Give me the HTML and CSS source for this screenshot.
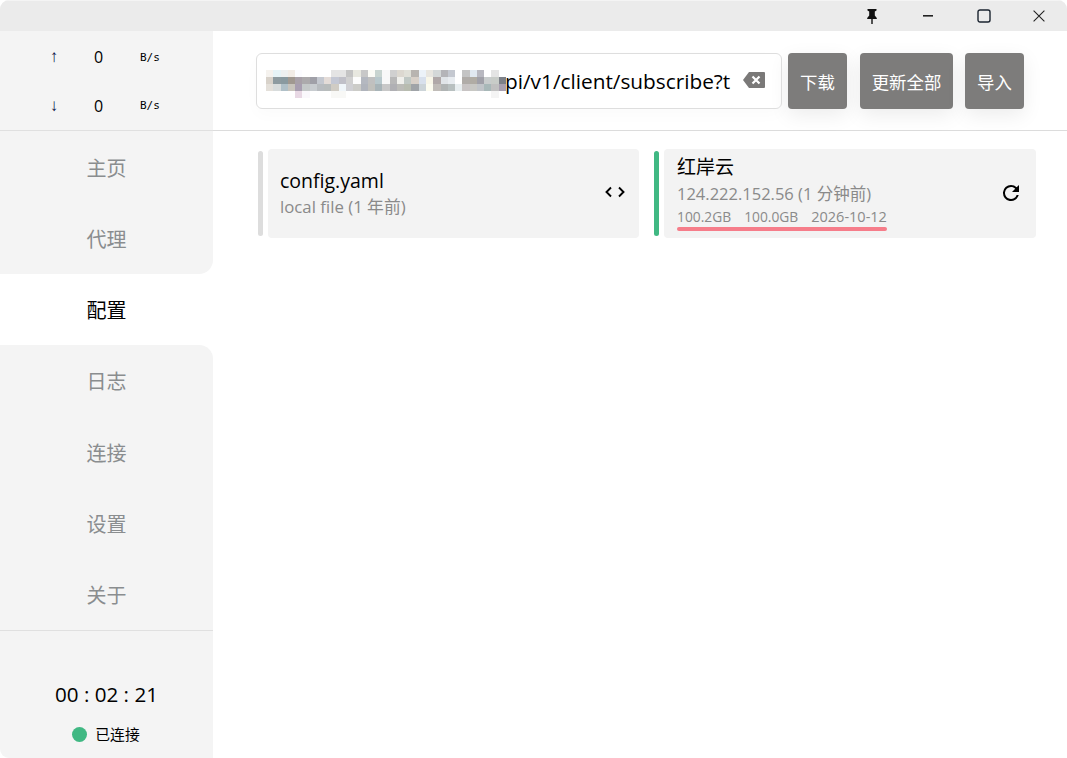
FILE: index.html
```html
<!DOCTYPE html>
<html lang="zh-CN">
<head>
<meta charset="utf-8">
<title>Clash</title>
<link rel="stylesheet" href="styles.css">
</head>
<body>
<div class="app">
  <header class="titlebar">
    <button class="win-btn win-shift"><svg width="14" height="16" viewBox="0 0 14 16"><path d="M2.500 1h9v1.500L9.800 3.500V7.500L11.800 10v1H7.700v5H6.300v-5H2.200v-1L4.200 7.500V3.500L2.500 2.500z" fill="#111"/></svg></button>
    <button class="win-btn win-shift"><svg width="10" height="2" viewBox="0 0 10 2"><rect width="10" height="1.6" fill="#222"/></svg></button>
    <button class="win-btn win-shift"><svg width="14" height="14" viewBox="0 0 14 14"><rect x="1" y="1" width="12" height="12" rx="2" fill="none" stroke="#1b2430" stroke-width="1.4"/></svg></button>
    <button class="win-btn"><svg width="12" height="12" viewBox="0 0 12 12"><path d="M.6.6l10.800 10.800M11.400.6L.6 11.400" stroke="#222" stroke-width="1.100" fill="none"/></svg></button>
  </header>
  <div class="layout">
    <aside class="sidebar">
      <section class="traffic">
        <div class="traffic-row"><span class="traffic-arrow">↑</span><span class="traffic-num">0</span><span class="traffic-unit">B/s</span></div>
        <div class="traffic-row"><span class="traffic-arrow">↓</span><span class="traffic-num">0</span><span class="traffic-unit">B/s</span></div>
      </section>
      <nav class="nav">
        <a class="nav-item">主页</a>
        <a class="nav-item nav-before">代理</a>
        <a class="nav-item nav-active">配置</a>
        <a class="nav-item nav-after">日志</a>
        <a class="nav-item">连接</a>
        <a class="nav-item">设置</a>
        <a class="nav-item">关于</a>
      </nav>
      <footer class="side-foot">
        <div class="clock">00 : 02 : 21</div>
        <div class="status"><span class="status-dot"></span>已连接</div>
      </footer>
    </aside>
    <main class="main">
      <section class="toolbar">
        <div class="url-box">
          <svg class="mosaic" width="240" height="28" viewBox="0 0 33 4" preserveAspectRatio="none" shape-rendering="crispEdges">
            <g>
              <rect x="0" y="0" width="1" height="1" fill="#f5f2ee"/><rect x="0" y="1" width="1" height="1" fill="#d8d2ca"/><rect x="0" y="2" width="1" height="1" fill="#e4e0da"/>
              <rect x="1" y="0" width="1" height="1" fill="#e6f3f6"/><rect x="1" y="1" width="1" height="1" fill="#8e9ba0"/><rect x="1" y="2" width="1" height="1" fill="#d8dcdc"/>
              <rect x="2" y="0" width="1" height="1" fill="#eef0f0"/><rect x="2" y="1" width="1" height="1" fill="#8a9aa0"/><rect x="2" y="2" width="1" height="1" fill="#b0c0c8"/>
              <rect x="3" y="0" width="1" height="1" fill="#f2ece6"/><rect x="3" y="1" width="1" height="1" fill="#a09890"/><rect x="3" y="2" width="1" height="1" fill="#c8c4bc"/>
              <rect x="4" y="0" width="1" height="1" fill="#fcfcff"/><rect x="4" y="1" width="1" height="1" fill="#a8a0a8"/><rect x="4" y="2" width="1" height="1" fill="#a89eb0"/><rect x="4" y="3" width="1" height="1" fill="#e8d8e4"/>
              <rect x="5" y="1" width="1" height="1" fill="#acaaac"/><rect x="5" y="2" width="1" height="1" fill="#c4c8c8"/><rect x="5" y="3" width="1" height="1" fill="#faf8fc"/>
              <rect x="6" y="1" width="1" height="1" fill="#a0a0a8"/><rect x="6" y="2" width="1" height="1" fill="#c8ccd0"/>
              <rect x="7" y="1" width="1" height="1" fill="#c4c8d0"/><rect x="7" y="2" width="1" height="1" fill="#b8bcc0"/>
              <rect x="8" y="1" width="1" height="1" fill="#e4dcd8"/><rect x="8" y="2" width="1" height="1" fill="#b8bcbc"/>
              <rect x="9" y="0" width="1" height="1" fill="#e4e4e4"/><rect x="9" y="1" width="1" height="1" fill="#c4c8d4"/><rect x="9" y="2" width="1" height="1" fill="#d0ccc4"/><rect x="9" y="3" width="1" height="1" fill="#f8f8f6"/>
              <rect x="10" y="0" width="1" height="1" fill="#e4e4e4"/><rect x="10" y="1" width="1" height="1" fill="#c0c0c8"/><rect x="10" y="2" width="1" height="1" fill="#f0f6fa"/><rect x="10" y="3" width="1" height="1" fill="#f8f8f6"/>
              <rect x="11" y="0" width="1" height="1" fill="#c4c4c4"/><rect x="11" y="1" width="1" height="1" fill="#d0d0d0"/><rect x="11" y="2" width="1" height="1" fill="#d0d0d4"/>
              <rect x="12" y="0" width="1" height="1" fill="#e8e8e0"/><rect x="12" y="1" width="1" height="1" fill="#fcfcfc"/><rect x="12" y="2" width="1" height="1" fill="#ccccc8"/>
              <rect x="13" y="0" width="1" height="1" fill="#c8c8c8"/><rect x="13" y="1" width="1" height="1" fill="#b4b8c0"/><rect x="13" y="2" width="1" height="1" fill="#b0b4bc"/>
              <rect x="14" y="0" width="1" height="1" fill="#fbfbf6"/><rect x="14" y="1" width="1" height="1" fill="#c0c0c0"/><rect x="14" y="2" width="1" height="1" fill="#c0c0bc"/>
              <rect x="15" y="0" width="1" height="1" fill="#c8d4d0"/><rect x="15" y="1" width="1" height="1" fill="#b8c8cc"/><rect x="15" y="2" width="1" height="1" fill="#a8b4b8"/>
              <rect x="16" y="0" width="1" height="1" fill="#f8f8f8"/><rect x="16" y="1" width="1" height="1" fill="#f8f8f8"/><rect x="16" y="2" width="1" height="1" fill="#c8c8c8"/>
              <rect x="17" y="0" width="1" height="1" fill="#d0d0d0"/><rect x="17" y="1" width="1" height="1" fill="#b8b8b8"/><rect x="17" y="2" width="1" height="1" fill="#b0b0b4"/>
              <rect x="18" y="0" width="1" height="1" fill="#dcd8d0"/><rect x="18" y="1" width="1" height="1" fill="#f0f0ec"/><rect x="18" y="2" width="1" height="1" fill="#bcbcb8"/>
              <rect x="19" y="0" width="1" height="1" fill="#e0e0d8"/><rect x="19" y="1" width="1" height="1" fill="#c0c8c4"/><rect x="19" y="2" width="1" height="1" fill="#b8bcb0"/>
              <rect x="20" y="0" width="1" height="1" fill="#b8b4b0"/><rect x="20" y="1" width="1" height="1" fill="#d8d0c8"/><rect x="20" y="2" width="1" height="1" fill="#a0a4a8"/>
              <rect x="21" y="0" width="1" height="1" fill="#ecf2f8"/><rect x="21" y="1" width="1" height="1" fill="#d8e0ec"/><rect x="21" y="2" width="1" height="1" fill="#ccd4d8"/>
              <rect x="22" y="0" width="1" height="1" fill="#e8e6e0"/><rect x="22" y="1" width="1" height="1" fill="#f8f6e8"/><rect x="22" y="2" width="1" height="1" fill="#fcfcf0"/>
              <rect x="23" y="0" width="1" height="1" fill="#d4d8d8"/><rect x="23" y="1" width="1" height="1" fill="#b0a8a8"/><rect x="23" y="2" width="1" height="1" fill="#c0bcb8"/>
              <rect x="24" y="0" width="1" height="1" fill="#b4b4b8"/><rect x="24" y="1" width="1" height="1" fill="#e0e4e8"/><rect x="24" y="2" width="1" height="1" fill="#b0b4b4"/>
              <rect x="25" y="0" width="1" height="1" fill="#c4c8d0"/><rect x="25" y="1" width="1" height="1" fill="#e8ecf0"/><rect x="25" y="2" width="1" height="1" fill="#b8c0c0"/>
              <rect x="26" y="2" width="1" height="1" fill="#e8eef0"/>
              <rect x="27" y="0" width="1" height="1" fill="#c4c4c4"/><rect x="27" y="1" width="1" height="1" fill="#b0aca8"/><rect x="27" y="2" width="1" height="1" fill="#c8c4c4"/>
              <rect x="28" y="0" width="1" height="1" fill="#e0e8f0"/><rect x="28" y="1" width="1" height="1" fill="#b0aca4"/><rect x="28" y="2" width="1" height="1" fill="#c8c8c4"/>
              <rect x="29" y="0" width="1" height="1" fill="#b8b8c0"/><rect x="29" y="1" width="1" height="1" fill="#a0a0a8"/><rect x="29" y="2" width="1" height="1" fill="#c0c4c8"/>
              <rect x="30" y="1" width="1" height="1" fill="#c8cccc"/><rect x="30" y="2" width="1" height="1" fill="#a8b8b8"/>
              <rect x="31" y="0" width="1" height="1" fill="#e4e4e4"/><rect x="31" y="1" width="1" height="1" fill="#c8ccc8"/><rect x="31" y="2" width="1" height="1" fill="#c0c0c0"/><rect x="31" y="3" width="1" height="1" fill="#f4f4f4"/>
              <rect x="32" y="1" width="1" height="1" fill="#7c8088"/><rect x="32" y="2" width="1" height="1" fill="#a8a0b0"/>
            </g>
          </svg>
          <span class="url-text">pi/v1/client/subscribe?t</span>
          <svg class="url-clear" width="24" height="18" viewBox="0 0 24 18"><path d="M7 1h15a1 1 0 0 1 1 1v14a1 1 0 0 1-1 1H7L1 9z" fill="#7a7978"/><path d="M10.500 5.500l7 7M17.500 5.500l-7 7" stroke="#fff" stroke-width="2.200"/></svg>
        </div>
        <button class="tool-btn btn-a">下载</button>
        <button class="tool-btn btn-b">更新全部</button>
        <button class="tool-btn btn-c">导入</button>
      </section>
      <section class="profiles">
        <article class="profile">
          <span class="profile-bar"></span>
          <div class="profile-card card-local">
            <div class="profile-info">
              <div class="profile-name">config.yaml</div>
              <div class="profile-sub">local file (1 年前)</div>
            </div>
            <svg class="icon-code" width="20" height="12" viewBox="0 0 20 12"><path d="M6 1.500L1.500 6 6 10.500M14 1.500L18.500 6 14 10.500" fill="none" stroke="#000" stroke-width="1.900"/></svg>
          </div>
        </article>
        <article class="profile">
          <span class="profile-bar bar-on"></span>
          <div class="profile-card">
            <div class="profile-info info-remote">
              <div class="profile-name name-cjk">红岸云</div>
              <div class="profile-sub">124.222.152.56 (1 分钟前)</div>
              <div class="profile-usage"><span>100.2GB</span><span>100.0GB</span><span class="usage-date">2026-10-12</span></div>
              <div class="usage-line"></div>
            </div>
            <svg class="icon-refresh" width="24" height="24" viewBox="0 0 24 24"><path d="M17.650 6.350A7.960 7.960 0 0 0 12 4a8 8 0 1 0 7.730 10h-2.080A6 6 0 1 1 12 6c1.660 0 3.140.69 4.220 1.780L13 11h7V4z" fill="#000"/></svg>
          </div>
        </article>
      </section>
    </main>
  </div>
</div>
</body>
</html>
```

FILE: styles.css
```css
* { box-sizing: border-box; }
html, body { margin: 0; height: 100%; background: #fff; }
body { font-family: "Open Sans", "Noto Sans CJK SC", sans-serif; color: #000; overflow: hidden; }
.app { width: 1067px; height: 758px; display: flex; flex-direction: column; border-radius: 9px; overflow: hidden; }

.titlebar { height: 31px; flex: none; background: #ebebeb; display: flex; justify-content: flex-end; align-items: center; border-top: 1px solid #f4f4f4; }
.win-btn { width: 56px; height: 30px; border: 0; padding: 0; background: none; display: flex; align-items: center; justify-content: center; }
.win-shift { padding-left: 2px; }

.layout { flex: 1; display: flex; min-height: 0; }
.sidebar { width: 213px; flex: none; display: flex; flex-direction: column; background: #fff; }

.traffic { height: 100px; flex: none; background: #f4f4f4; border-bottom: 1px solid #e0e0e0; display: flex; flex-direction: column; padding-top: 2px; }
.traffic-row { height: 49px; display: grid; grid-template-columns: 44px 45px 60px; padding-left: 32px; align-items: center; }
.traffic-arrow { text-align: center; font-size: 17px; line-height: 20px; color: #0e1648; font-family: "Liberation Sans", sans-serif; }
.traffic-num { text-align: center; font-size: 16px; }
.traffic-unit { font-size: 11px; font-family: "DejaVu Sans Mono", monospace; padding-left: 19px; }

.nav { height: 499px; flex: none; display: flex; flex-direction: column; background: #fff; }
.nav-item { flex: 1; display: flex; align-items: center; justify-content: center; padding-top: 1px; font-size: 20px; color: #8a8d8f; background: #f4f4f4; }
.nav-active { color: #000; background: #fff; }
.nav-before { border-bottom-right-radius: 14px; }
.nav-after { border-top-right-radius: 14px; }

.side-foot { flex: 1; background: #f4f4f4; border-top: 1px solid #e0e0e0; display: flex; flex-direction: column; align-items: center; padding-top: 48px; }
.clock { font-size: 20.600px; line-height: 30px; }
.status { margin-top: 13px; display: flex; align-items: center; gap: 8px; font-size: 14.800px; line-height: 24px; margin-left: -1px; }
.status-dot { width: 15px; height: 15px; border-radius: 50%; background: #40b883; }

.main { flex: 1; min-width: 0; display: flex; flex-direction: column; }
.toolbar { height: 100px; flex: none; border-bottom: 1px solid #dcdcdc; display: flex; align-items: flex-start; padding: 22px 0 0 43px; }
.url-box { width: 526px; height: 56px; border: 1px solid #dedede; border-radius: 6px; display: flex; align-items: center; padding-left: 9px; box-shadow: 0 6px 16px rgba(0,0,0,.02); position: relative; }
.mosaic { flex: none; display: block; margin-top: 6px; }
.url-text { font-size: 20.800px; white-space: nowrap; margin-left: -1px; }
.url-clear { position: absolute; right: 15px; top: 17px; }
.tool-btn { height: 56px; border: 0; border-radius: 4px; background: #7d7c7b; color: #fff; font: inherit; font-size: 17.400px; padding: 0; margin-left: 13px; box-shadow: 0 6px 20px rgba(0,0,0,.08); }
.btn-a { width: 59px; margin-left: 6px; }
.btn-b { width: 93px; }
.btn-c { width: 59px; margin-left: 12px; }

.profiles { display: grid; grid-template-columns: 381px 382px; gap: 15px; padding: 18px 0 0 45px; }
.profile { display: flex; height: 89px; align-items: center; gap: 5px; }
.profile-bar { width: 5px; height: 85px; border-radius: 3px; background: #dddddd; flex: none; }
.bar-on { background: #40b883; }
.profile-card { flex: 1; height: 89px; background: #f3f3f3; border-radius: 4px; display: flex; align-items: center; justify-content: space-between; padding: 0 13px; }
.card-local { padding-left: 12px; }
.card-local .profile-sub { font-size: 16.800px; }
.profile-name { font-size: 19.500px; line-height: 26px; }
.profile-sub { font-size: 16.500px; line-height: 26px; color: #8a8a8a; }
.name-cjk { font-size: 19px; line-height: 27px; }
.info-remote { padding-bottom: 2px; }
.profile-usage { display: flex; gap: 13px; margin-top: 1px; font-size: 13.800px; line-height: 18px; color: #8a8a8a; }
.usage-date { font-size: 14.500px; }
.usage-line { height: 4px; border-radius: 2px; margin-top: 1px; background: #f67d8a; }
.icon-code { flex: none; margin: -3px 1px 0 0; }
.icon-refresh { flex: none; margin-top: -2px; }
```
